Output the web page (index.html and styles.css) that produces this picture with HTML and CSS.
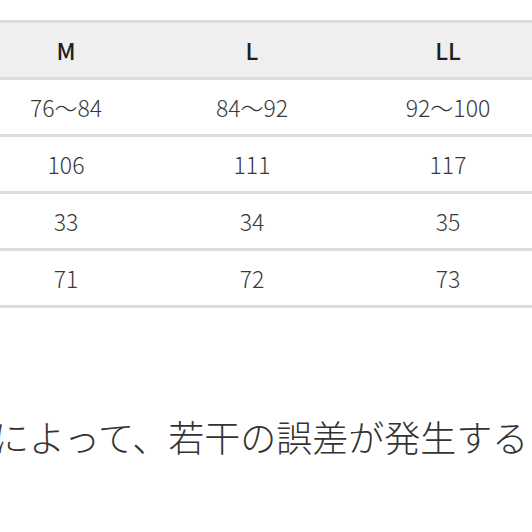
FILE: index.html
```html
<!DOCTYPE html>
<html lang="ja">
<head>
<meta charset="utf-8">
<link rel="stylesheet" href="styles.css">
</head>
<body>
<div class="page">
  <div class="table">
    <div class="row head">
      <div class="cell">M</div>
      <div class="cell">L</div>
      <div class="cell">LL</div>
      <div class="cell"></div>
    </div>
    <div class="row">
      <div class="cell">76〜84</div>
      <div class="cell">84〜92</div>
      <div class="cell">92〜100</div>
      <div class="cell"></div>
    </div>
    <div class="row">
      <div class="cell">106</div>
      <div class="cell">111</div>
      <div class="cell">117</div>
      <div class="cell"></div>
    </div>
    <div class="row">
      <div class="cell">33</div>
      <div class="cell">34</div>
      <div class="cell">35</div>
      <div class="cell"></div>
    </div>
    <div class="row">
      <div class="cell">71</div>
      <div class="cell">72</div>
      <div class="cell">73</div>
      <div class="cell"></div>
    </div>
  </div>
  <p class="note">法によって、若干の誤差が発生するこ</p>
</div>
</body>
</html>
```
FILE: styles.css
```css
html, body {
  margin: 0;
  padding: 0;
  background: #ffffff;
  overflow: hidden;
}
.page {
  width: 532px;
  height: 532px;
  overflow: hidden;
  padding-top: 20px;
  box-sizing: border-box;
  font-family: "Noto Sans CJK JP", "Noto Sans", sans-serif;
}
.table {
  border-top: 3px solid #dcdcdc;
}
.row {
  display: grid;
  grid-template-columns: 132px 240px 152px 1fr;
  height: 54px;
  border-bottom: 3px solid #dcdcdc;
  align-items: center;
  font-size: 23px;
  font-weight: 300;
  color: #3a3a3a;
}
.row.head {
  background: #efefef;
  font-weight: 500;
  color: #1e1e1e;
  font-size: 23px;
}
.cell {
  text-align: center;
  white-space: nowrap;
}
.note {
  margin: 0;
  margin-top: 108px;
  margin-left: -43px;
  font-size: 36px;
  font-weight: 300;
  line-height: 40px;
  color: #333333;
  white-space: nowrap;
}
```
